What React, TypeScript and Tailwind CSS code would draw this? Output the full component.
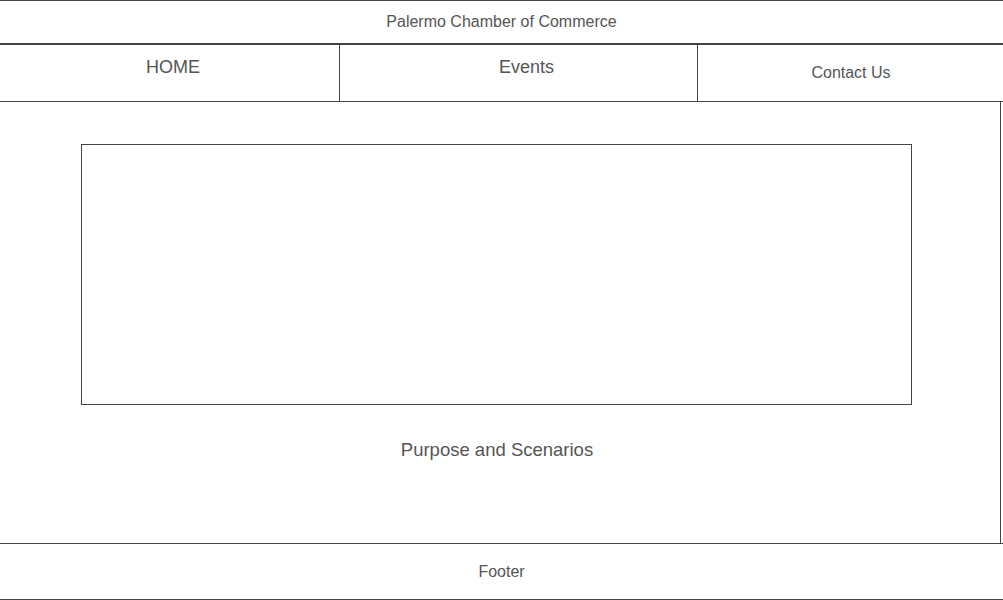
export default function App() {
	const font = { fontFamily: '"Liberation Sans", Arial, sans-serif' };
	return (
		<div className="w-[1003px] h-[600px] bg-white text-[#555] overflow-hidden" style={font}>
			<header className="h-[45px] border-t border-b-2 border-[#444] flex items-center justify-center pb-[1px] text-[16px]">
				Palermo Chamber of Commerce
			</header>

			<nav className="h-[57px] border-b border-[#444] flex">
				<div className="w-[340px] border-r border-[#444] flex justify-center pt-[9px] pl-[7px] text-[18px]">
					HOME
				</div>
				<div className="w-[358px] border-r border-[#444] flex justify-center pt-[9px] pl-[16px] text-[18px]">
					Events
				</div>
				<div className="flex-1 flex items-center justify-center text-[16px] pl-[1px]">
					Contact Us
				</div>
			</nav>

			<main className="w-[1001px] h-[441px] border-r border-[#444] flex flex-col">
				<div className="ml-[81px] mt-[42px] w-[831px] h-[261px] border border-[#444]" />
				<div className="mt-[31px] text-center w-[994px] text-[18.5px]">Purpose and Scenarios</div>
			</main>

			<footer className="h-[57px] border-t border-b border-[#444] flex items-center justify-center text-[16px]">
				Footer
			</footer>
		</div>
	);
}
